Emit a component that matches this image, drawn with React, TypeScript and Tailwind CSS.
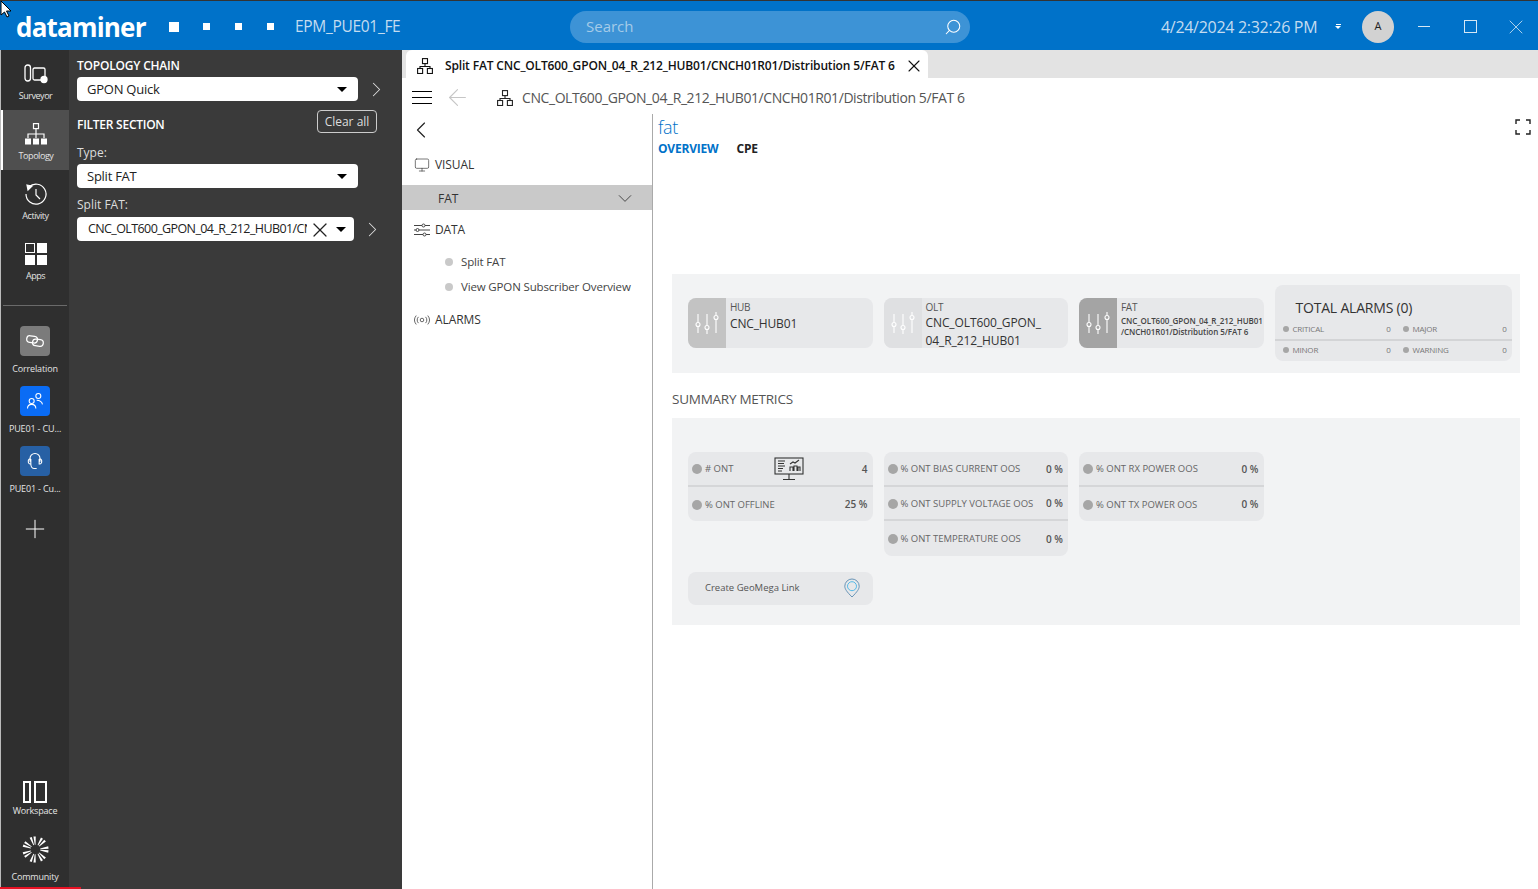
import { ChevronDown, ChevronLeft, ChevronRight, X, Search, ArrowLeft, Plus, Monitor } from "lucide-react";

const FONT = "font-['Open_Sans','Noto_Sans',sans-serif]";

function RailTopologyIcon() {
  return (
    <svg viewBox="0 0 22 22" className="w-[22px] h-[22px]" fill="none" stroke="white" strokeWidth="1.2">
      <rect x="8.500" y="0.600" width="5" height="5" />
      <path d="M11 5.600v5.400M3 15v-4h16v4M11 11v4" />
      <rect x="0" y="15.500" width="6" height="6" fill="white" stroke="none" />
      <rect x="8" y="15.500" width="6" height="6" fill="white" stroke="none" />
      <rect x="16" y="15.500" width="6" height="6" fill="white" stroke="none" />
    </svg>
  );
}

function TabTopologyIcon({ className = "" }: { className?: string }) {
  return (
    <svg viewBox="0 0 16 16" className={className} fill="none" stroke="currentColor" strokeWidth="1.100">
      <rect x="5.500" y="0.600" width="5" height="5" />
      <path d="M8 5.600v3.400M3 10.500V8.500h10v2" />
      <rect x="0.600" y="10.500" width="5" height="5" />
      <rect x="10.400" y="10.500" width="5" height="5" />
    </svg>
  );
}

function SlidersIcon() {
  return (
    <svg viewBox="0 0 24 34" className="w-[24px] h-[34px]" fill="none" stroke="white" strokeWidth="1.100">
      <path d="M3 8v8M3 21v6M12 8v11M12 24v4M21 6v3M21 14v13" />
      <circle cx="3" cy="18.500" r="2" />
      <circle cx="12" cy="21.500" r="2" />
      <circle cx="21" cy="11.500" r="2" />
    </svg>
  );
}

function RailItem({ label, active, children }: { label: string; active?: boolean; children: React.ReactNode }) {
  return (
    <div className={`h-[60px] pt-[9px] flex flex-col items-center ${active ? "bg-[#4f4f4f] border-l-2 border-white" : "pl-[1px]"}`}>
      <div className="h-[30px] flex items-center justify-center text-white">{children}</div>
      <span className="mt-[1px] text-[9px] leading-[12px] tracking-[-0.45px] text-[#e4e4e4]">{label}</span>
    </div>
  );
}

function AppItem({ label, bg, children }: { label: string; bg: string; children: React.ReactNode }) {
  return (
    <div className="h-[60px] flex flex-col items-center">
      <div className={`w-[30px] h-[30px] rounded-[4px] flex items-center justify-center ${bg}`}>{children}</div>
      <span className="mt-[7px] text-[9px] leading-[12px] tracking-[-0.15px] text-[#e4e4e4] whitespace-nowrap">{label}</span>
    </div>
  );
}

function Select({ value, wide }: { value: string; wide?: boolean }) {
  if (wide) {
    return (
      <div className="h-[24px] pt-[1px] w-[277px] bg-white rounded-[4px] flex items-center pl-[11px] pr-[8px] text-[12.5px] text-[#222]">
        <span className="w-[219px] shrink-0 overflow-hidden whitespace-nowrap tracking-[-0.6px]">{value}</span>
        <X className="w-[24px] h-[24px] ml-[1px] mr-[1px] shrink-0" strokeWidth={1.2} />
        <span className="ml-[3px] w-0 h-0 border-x-[5px] border-x-transparent border-t-[5px] border-t-black" />
      </div>
    );
  }
  return (
    <div className="h-[24px] pt-[1px] w-[281px] bg-white rounded-[4px] flex items-center pl-[10px] pr-[11px] text-[13px] text-[#222]">
      <span className="flex-1 tracking-[-0.25px]">{value}</span>
      <span className="w-0 h-0 border-x-[5px] border-x-transparent border-t-[5px] border-t-black" />
    </div>
  );
}

function NavRow({ icon, label }: { icon: React.ReactNode; label: string }) {
  return (
    <div className="flex items-center gap-[5px] pl-[12px] text-[12px] tracking-[-0.1px] text-[#333]">
      <span className="w-[16px] flex justify-center">{icon}</span>
      {label}
    </div>
  );
}

function Card({ label, tint, children }: { label: string; tint: string; children: React.ReactNode }) {
  return (
    <div className="w-[184.5px] h-[50px] rounded-[8px] bg-[#e7e8ea] flex overflow-hidden">
      <div className={`w-[38px] shrink-0 flex items-center justify-center ${tint}`}>
        <SlidersIcon />
      </div>
      <div className="pl-[4px] pt-[3px] min-w-0">
        <div className="text-[10px] leading-[13px] tracking-[-0.3px] text-[#555]">{label}</div>
        {children}
      </div>
    </div>
  );
}

function MetricRow({ label, value, line, icon }: { label: string; value: string; line?: boolean; icon?: boolean }) {
  return (
    <div className={`h-[34.5px] pt-[2px] flex items-center pl-[4px] pr-[5px] text-[9.5px] text-[#666] ${line ? "border-b-2 border-[#d5d6d8]" : ""}`}>
      <span className="w-[10px] h-[10px] rounded-full bg-[#a6a6a6] mr-[3px] shrink-0" />
      <span className="whitespace-nowrap">{label}</span>
      {icon && (
        <svg viewBox="0 0 30 24" className="ml-[41px] w-[30px] h-[24px]" fill="none" stroke="#333" strokeWidth="1.100">
          <rect x="1" y="1" width="28" height="16" />
          <path d="M4 4h7M4 6.500h6M4 9h7M4 11.500h5M4 14h4M16 14v-4h3v4M20 14v-5h3v5M24 14v-4h2v4M16 7l3-2 2 1 4-3" />
          <path d="M15 17v5M9 22.500h12" />
        </svg>
      )}
      <span className="ml-auto text-[10px] font-semibold text-[#555]">{value}</span>
    </div>
  );
}

function AlarmCell({ label, value }: { label: string; value: string }) {
  return (
    <div className="flex items-center text-[8px] tracking-[-0.2px] text-[#777]">
      <span className="w-[6px] h-[6px] rounded-full bg-[#a6a6a6] mr-[4px]" />
      {label}
      <span className="ml-auto">{value}</span>
    </div>
  );
}

const SPOKES = [0, 1, 2, 3, 4, 5, 6, 7, 8, 9, 10, 11, 12, 13];

export default function App() {
  return (
    <div className={`relative w-[1538px] h-[889px] overflow-hidden bg-white flex flex-col ${FONT}`}>
      <svg viewBox="0 0 12 18" className="absolute left-0 top-0 w-[12px] h-[18px] z-10">
        <path d="M1 1v14l3.500-3 2.500 5 2-1-2.500-5H11z" fill="white" stroke="black" strokeWidth="1" />
      </svg>
      <div className="absolute left-0 bottom-0 w-[81px] h-[2px] bg-[#e81123] z-10" />

      {/* title bar */}
      <div className="h-[50px] shrink-0 border-t border-[#333] pt-[2px] bg-[#0072c9] flex items-center text-[#c4dcf0]">
        <span className="ml-[16px] w-[135px] text-[26px] font-bold tracking-[-0.8px] text-white leading-none">dataminer</span>
        <span className="ml-[18px] w-[10px] h-[10px] bg-white" />
        <span className="ml-[24px] w-[7px] h-[7px] bg-white" />
        <span className="ml-[25px] w-[7px] h-[7px] bg-white" />
        <span className="ml-[25px] w-[7px] h-[7px] bg-white" />
        <span className="ml-[21px] w-[275px] text-[15.5px] tracking-[-0.3px]">EPM_PUE01_FE</span>
        <div className="w-[400px] h-[32px] rounded-full bg-[#3d93d6] flex items-center pl-[16px] pr-[8px] text-[15px] text-[#a5cbe8]">
          <span className="flex-1">Search</span>
          <Search className="w-[18px] h-[18px] text-white -scale-x-100" strokeWidth={1.4} />
        </div>
        <span className="ml-[191px] w-[166px] text-[16px] tracking-[-0.3px] whitespace-nowrap">4/24/2024 2:32:26 PM</span>
        <span className="ml-[8px] flex flex-col items-center gap-[1px]">
          <span className="w-[5px] h-px bg-white" />
          <span className="w-0 h-0 border-x-[3px] border-x-transparent border-t-[3px] border-t-white" />
        </span>
        <span className="ml-[21px] w-[32px] h-[32px] rounded-full bg-[#d2d2d2] flex items-center justify-center text-[11px] text-[#222]">A</span>
        <span className="ml-[24px] w-[12px] h-px bg-[#d6e8f5]" />
        <span className="ml-[34px] w-[13px] h-[13px] border border-[#d6e8f5]" />
        <X className="ml-[27px] w-[24px] h-[24px] text-[#d6e8f5]" strokeWidth={0.8} />
      </div>

      <div className="flex-1 flex min-h-0">
        {/* left rail */}
        <div className="w-[69px] shrink-0 bg-[#2f2f2f] border-l border-[#bbb] flex flex-col">
          <RailItem label="Surveyor">
            <svg viewBox="0 0 24 22" className="w-[24px] h-[22px]" fill="none" stroke="white" strokeWidth="1.300">
              <rect x="1" y="2" width="5.500" height="16" rx="2.700" />
              <rect x="9" y="5" width="12" height="12" rx="1.500" />
              <circle cx="20" cy="16.500" r="3" fill="white" />
            </svg>
          </RailItem>
          <RailItem label="Topology" active>
            <RailTopologyIcon />
          </RailItem>
          <RailItem label="Activity">
            <svg viewBox="0 0 24 24" className="w-[24px] h-[24px]" fill="none" stroke="white" strokeWidth="1.200">
              <path d="M5 5a10 10 0 1 1-3 7" />
              <path d="M12 7v6l4 4" />
              <path d="M3 3l5 1-4 4z" fill="white" />
            </svg>
          </RailItem>
          <RailItem label="Apps">
            <div className="grid grid-cols-2 gap-[2px]">
              <span className="w-[10px] h-[10px] border border-white" />
              <span className="w-[10px] h-[10px] bg-white" />
              <span className="w-[10px] h-[10px] bg-white" />
              <span className="w-[10px] h-[10px] bg-white" />
            </div>
          </RailItem>
          <div className="mt-[15px] mx-[2px] h-px bg-[#6a6a6a]" />
          <div className="mt-[20px]">
            <AppItem label="Correlation" bg="bg-[#7b7b7b]">
              <svg viewBox="0 0 24 24" className="w-[20px] h-[20px]" fill="none" stroke="white" strokeWidth="1.500">
                <rect x="2" y="6" width="13" height="8" rx="4" transform="rotate(8 8 10)" />
                <rect x="9" y="10" width="13" height="8" rx="4" transform="rotate(8 15 14)" />
              </svg>
            </AppItem>
            <AppItem label="PUE01 - CU..." bg="bg-[#0a6cf5]">
              <svg viewBox="0 0 24 24" className="w-[20px] h-[20px]" fill="none" stroke="white" strokeWidth="1.300">
                <circle cx="16" cy="6" r="3" />
                <circle cx="8" cy="12" r="3" />
                <path d="M3 21c0-3 2-5 5-5s5 2 5 5M14 11c3 0 6 1 7 5" />
              </svg>
            </AppItem>
            <AppItem label="PUE01 - Cu..." bg="bg-[#2760a4]">
              <svg viewBox="0 0 24 24" className="w-[20px] h-[20px]" fill="none" stroke="white" strokeWidth="1.300">
                <path d="M6 13V9a6 6 0 0 1 12 0v4M7 9.500v6H6a2.500 2.500 0 0 1-2-3 2.500 2.500 0 0 1 3-3M17 9.500v6h1a2.500 2.500 0 0 0 2-3 2.500 2.500 0 0 0-3-3M7 16c0 3 2 5 4 5h3" />
              </svg>
            </AppItem>
          </div>
          <Plus className="mt-[8px] mx-auto w-[30px] h-[30px] text-white" strokeWidth={0.8} />
          <div className="mt-auto flex flex-col items-center pb-[4px]">
            <div className="flex gap-[3px]">
              <span className="w-[8px] h-[22px] border-2 border-white" />
              <span className="w-[13px] h-[22px] border-2 border-white" />
            </div>
            <span className="mt-[2px] text-[9px] leading-[12px] tracking-[-0.2px] text-[#e4e4e4]">Workspace</span>
          </div>
          <div className="h-[68px] flex flex-col items-center pt-[15px]">
            <svg viewBox="0 0 28 28" className="w-[27px] h-[27px]" fill="white">
              {SPOKES.map((i) => (
                <path key={i} d="M12.800 0.500h2.400l-.8 8.500h-.8z" transform={`rotate(${(i * 360) / 14 + (i % 2 ? 4 : -4)} 14 14)`} />
              ))}
            </svg>
            <span className="mt-[8px] text-[9px] leading-[12px] tracking-[-0.2px] text-[#e4e4e4]">Community</span>
          </div>
        </div>

        {/* filter panel */}
        <div className="w-[333px] shrink-0 bg-[#3a3a3a] pl-[8px] pt-[8px] text-white">
          <div className="text-[12px] font-semibold leading-[15px] tracking-[-0.2px]">TOPOLOGY CHAIN</div>
          <div className="mt-[4px] h-[24px] flex items-center">
            <Select value="GPON Quick" />
            <ChevronRight className="ml-[5.5px] w-[25px] h-[25px] text-[#ddd]" strokeWidth={1} />
          </div>
          <div className="mt-[9px] h-[23px] flex items-end w-[300px]">
            <span className="text-[12px] leading-[17px] font-semibold tracking-[-0.25px]">FILTER SECTION</span>
            <span className="ml-auto w-[60px] h-[23px] rounded-[4px] border border-[#ccc] flex items-center justify-center text-[12px] text-[#ddd]">Clear all</span>
          </div>
          <div className="mt-[12px] text-[12px] leading-[16px] text-[#ddd]">Type:</div>
          <div className="mt-[3px]"><Select value="Split FAT" /></div>
          <div className="mt-[9px] text-[12px] leading-[16px] text-[#ddd]">Split FAT:</div>
          <div className="mt-[4px] h-[24px] flex items-center">
            <Select wide value="CNC_OLT600_GPON_04_R_212_HUB01/CNCH01R01/Distribution 5/FAT 6" />
            <ChevronRight className="ml-[5.5px] w-[25px] h-[25px] text-[#ddd]" strokeWidth={1} />
          </div>
        </div>

        {/* main */}
        <div className="flex-1 min-w-0 flex flex-col">
          <div className="h-[28px] shrink-0 bg-[#e3e3e3] pl-[4px]">
            <div className="w-[522px] h-[28px] pt-[3px] bg-white rounded-t-[6px] flex items-center pl-[11px] text-[12px] font-semibold text-[#111] whitespace-nowrap">
              <TabTopologyIcon className="w-[16px] h-[16px] shrink-0" />
              <span className="ml-[12px] tracking-[-0.16px]">Split FAT CNC_OLT600_GPON_04_R_212_HUB01/CNCH01R01/Distribution 5/FAT 6</span>
              <X className="ml-[9px] w-[20px] h-[20px] shrink-0" strokeWidth={1.3} />
            </div>
          </div>
          <div className="h-[36px] pt-[3px] shrink-0 flex items-center pl-[10px] text-[#444]">
            <div className="w-[20px] flex flex-col gap-[5px]">
              <span className="h-px bg-black" />
              <span className="h-px bg-black" />
              <span className="h-px bg-black" />
            </div>
            <ArrowLeft className="ml-[12px] w-[27px] h-[27px] text-[#c6c6c6]" strokeWidth={1} />
            <TabTopologyIcon className="ml-[26px] w-[16px] h-[16px] text-[#222]" />
            <span className="ml-[9px] text-[14px] tracking-[-0.42px] text-[#555] whitespace-nowrap">CNC_OLT600_GPON_04_R_212_HUB01/CNCH01R01/Distribution 5/FAT 6</span>
          </div>
          <div className="flex-1 flex min-h-0">
            {/* side nav */}
            <div className="w-[251px] shrink-0 border-r border-[#aaa] flex flex-col">
              <ChevronLeft className="mt-[2px] ml-[5px] w-[28px] h-[28px] text-[#222]" strokeWidth={1} />
              <div className="mt-[12px]">
                <NavRow icon={<Monitor className="w-[16px] h-[16px]" strokeWidth={1} />} label="VISUAL" />
              </div>
              <div className="mt-[11px] h-[25px] pt-[2px] bg-[#c9c9c9] flex items-center pl-[36px] pr-[13px] text-[12px] text-[#333]">
                <span className="flex-1">FAT</span>
                <ChevronDown className="w-[28px] h-[23px]" strokeWidth={0.9} />
              </div>
              <div className="mt-[11px]">
                <NavRow
                  icon={
                    <svg viewBox="0 0 16 14" className="w-[16px] h-[14px]" fill="none" stroke="#444" strokeWidth="1">
                      <path d="M0 2.500h8M11 2.500h5M0 7h2M5 7h11M0 11.500h9M12 11.500h4" />
                      <circle cx="9.500" cy="2.500" r="1.500" />
                      <circle cx="3.500" cy="7" r="1.500" />
                      <circle cx="10.500" cy="11.500" r="1.500" />
                    </svg>
                  }
                  label="DATA"
                />
              </div>
              <div className="mt-[14px] flex items-center pl-[43px] text-[11.5px] tracking-[-0.15px] text-[#444]">
                <span className="w-[8px] h-[8px] rounded-full bg-[#c9c9c9] mr-[8px]" />
                Split FAT
              </div>
              <div className="mt-[8px] flex items-center pl-[43px] text-[11.5px] tracking-[-0.15px] text-[#444]">
                <span className="w-[8px] h-[8px] rounded-full bg-[#c9c9c9] mr-[8px]" />
                View GPON Subscriber Overview
              </div>
              <div className="mt-[15px]">
                <NavRow
                  icon={
                    <svg viewBox="0 0 18 12" className="w-[17px] h-[12px]" fill="none" stroke="#555" strokeWidth="1">
                      <circle cx="9" cy="6" r="2" />
                      <path d="M5 2.500a5 5 0 0 0 0 7M13 2.500a5 5 0 0 1 0 7M2.500 1a8 8 0 0 0 0 10M15.500 1a8 8 0 0 1 0 10" />
                    </svg>
                  }
                  label="ALARMS"
                />
              </div>
            </div>

            {/* content */}
            <div className="relative flex-1 min-w-0 pl-[5px] pr-[18px]">
              <svg viewBox="0 0 16 16" className="absolute right-[7px] top-[5px] w-[16px] h-[16px]" fill="none" stroke="#222" strokeWidth="1.400">
                <path d="M1 5V1h4M11 1h4v4M1 11v4h4M15 11v4h-4" />
              </svg>
              <div className="h-[24px] pt-[1px] text-[18px] font-light leading-[24px] tracking-[-0.3px] text-[#0072c9]">fat</div>
              <div className="mt-[3px] flex gap-[18px] text-[12px] font-bold tracking-[-0.2px] leading-[16px]">
                <span className="text-[#0072c9]">OVERVIEW</span>
                <span className="text-[#222]">CPE</span>
              </div>

              <div className="mt-[117px] ml-[14px] h-[99px] bg-[#f2f3f4] pl-[16px] flex">
                <div className="mt-[24px] flex gap-[11px]">
                  <Card label="HUB" tint="bg-[#c3c3c3]">
                    <div className="mt-[1px] text-[12px] leading-[17px] tracking-[-0.15px] text-[#333]">CNC_HUB01</div>
                  </Card>
                  <Card label="OLT" tint="bg-[#dfe0e2]">
                    <div className="text-[12px] leading-[17.5px] tracking-[-0.1px] text-[#333]">CNC_OLT600_GPON_<br />04_R_212_HUB01</div>
                  </Card>
                  <Card label="FAT" tint="bg-[#a4a4a4]">
                    <div className="text-[8px] leading-[11px] font-semibold tracking-[-0.05px] text-[#444] whitespace-nowrap mt-[1px]">CNC_OLT600_GPON_04_R_212_HUB01<br />/CNCH01R01/Distribution 5/FAT 6</div>
                  </Card>
                </div>
                <div className="ml-[11px] mt-[11px] w-[237px] h-[76px] rounded-[8px] bg-[#e7e8ea] flex flex-col">
                  <div className="pl-[21px] pt-[13px] h-[37px] text-[14px] leading-[20px] tracking-[-0.2px] text-[#333]">TOTAL ALARMS (0)</div>
                  <div className="h-[14px] pl-[8px] grid grid-cols-[108px_104px] gap-x-[12px]">
                    <AlarmCell label="CRITICAL" value="0" />
                    <AlarmCell label="MAJOR" value="0" />
                  </div>
                  <div className="mt-[3px] h-[2px] bg-[#d3d4d6]" />
                  <div className="mt-[2px] h-[14px] pl-[8px] grid grid-cols-[108px_104px] gap-x-[12px]">
                    <AlarmCell label="MINOR" value="0" />
                    <AlarmCell label="WARNING" value="0" />
                  </div>
                </div>
              </div>

              <div className="ml-[14px] mt-[16px] h-[20px] text-[13.5px] leading-[20px] tracking-[-0.25px] text-[#555]">SUMMARY METRICS</div>

              <div className="ml-[14px] mt-[9px] h-[207px] bg-[#f2f3f4] pl-[16px] pt-[34px]">
                <div className="flex items-start gap-[11px]">
                  <div className="w-[184.5px] rounded-[8px] bg-[#e7e8ea]">
                    <MetricRow label="# ONT" value="4" line icon />
                    <MetricRow label="% ONT OFFLINE" value="25 %" />
                  </div>
                  <div className="w-[184.5px] rounded-[8px] bg-[#e7e8ea]">
                    <MetricRow label="% ONT BIAS CURRENT OOS" value="0 %" line />
                    <MetricRow label="% ONT SUPPLY VOLTAGE OOS" value="0 %" line />
                    <MetricRow label="% ONT TEMPERATURE OOS" value="0 %" />
                  </div>
                  <div className="w-[184.5px] rounded-[8px] bg-[#e7e8ea]">
                    <MetricRow label="% ONT RX POWER OOS" value="0 %" line />
                    <MetricRow label="% ONT TX POWER OOS" value="0 %" />
                  </div>
                </div>
                <div className="mt-[16px] w-[184.5px] h-[33px] rounded-[8px] bg-[#e7e8ea] flex items-center pl-[17px] pr-[12px] text-[9.5px] text-[#555]">
                  <span className="flex-1">Create GeoMega Link</span>
                  <svg viewBox="0 0 20 24" className="w-[18px] h-[22px]" fill="none" strokeWidth="1">
                    <path d="M10 22C4 16 2 13 2 10a8 8 0 0 1 16 0c0 3-2 6-8 12z" stroke="#5a8ab0" />
                    <circle cx="10" cy="10" r="5" stroke="#45b3e6" />
                  </svg>
                </div>
              </div>
            </div>
          </div>
        </div>
      </div>
    </div>
  );
}
